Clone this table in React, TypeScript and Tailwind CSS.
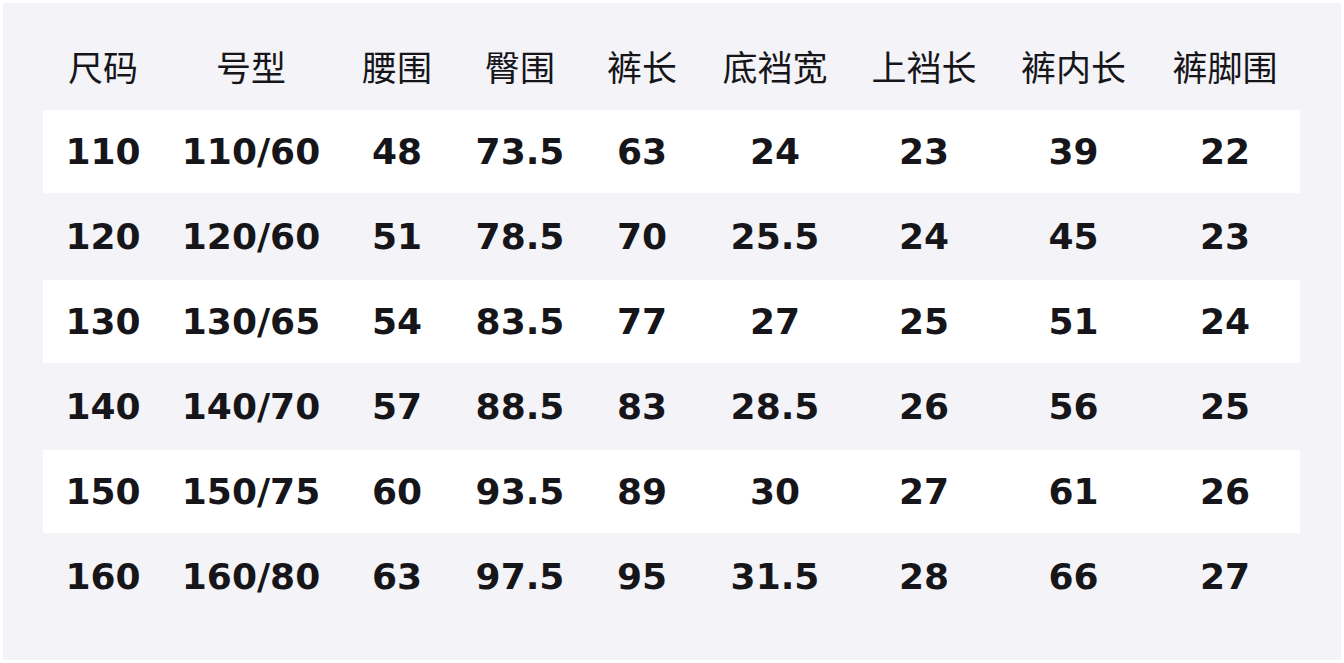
const headers = ["尺码", "号型", "腰围", "臀围", "裤长", "底裆宽", "上裆长", "裤内长", "裤脚围"];

const rows = [
  ["110", "110/60", "48", "73.5", "63", "24", "23", "39", "22"],
  ["120", "120/60", "51", "78.5", "70", "25.5", "24", "45", "23"],
  ["130", "130/65", "54", "83.5", "77", "27", "25", "51", "24"],
  ["140", "140/70", "57", "88.5", "83", "28.5", "26", "56", "25"],
  ["150", "150/75", "60", "93.5", "89", "30", "27", "61", "26"],
  ["160", "160/80", "63", "97.5", "95", "31.5", "28", "66", "27"],
];

const cols = "grid grid-cols-[120px_176px_116px_130px_114px_152px_146px_153px_150px]";

const App = () => {
  return (
    <div className="w-[1344px] h-[663px] bg-white p-[3px] font-['DejaVu_Sans','Noto_Sans_CJK_SC',sans-serif] text-[#16161a]">
      <div className="h-full bg-[#f3f3f8] pl-[40px] pt-[27px]">
        <div className="w-[1257px] flex flex-col gap-[2px]">
          <div className={`${cols} h-[78px] pb-[8px] items-center`}>
            {headers.map((h) => (
              <div key={h} className="text-center text-[35px] leading-none font-['Noto_Sans_CJK_SC',sans-serif]">
                {h}
              </div>
            ))}
          </div>
          {rows.map((r, i) => (
            <div
              key={r[0]}
              className={`${cols} h-[83px] items-center ${i % 2 === 0 ? "bg-white" : ""}`}
            >
              {r.map((v, j) => (
                <div key={j} className="text-center text-[36px] leading-none font-bold">
                  {v}
                </div>
              ))}
            </div>
          ))}
        </div>
      </div>
    </div>
  );
};

export default App;
